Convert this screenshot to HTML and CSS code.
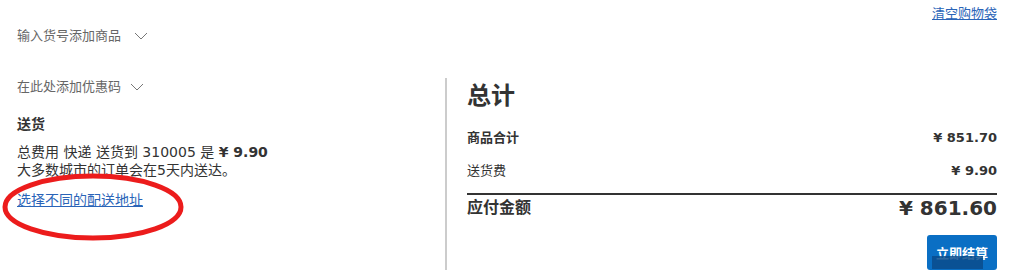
FILE: index.html
```html
<!DOCTYPE html>
<html lang="zh-CN">
<head>
    <meta charset="UTF-8">
    <title>购物袋</title>
    <link rel="stylesheet" href="styles.css">
</head>
<body>
    <div class="page">
        <div class="top-bar">
            <a href="#" class="clear-link">清空购物袋</a>
        </div>

        <div class="toggle add-item">输入货号添加商品
            <svg class="chevron" width="14" height="8" viewBox="0 0 14 8"><polyline points="1,1 7,7 13,1" fill="none" stroke="#777" stroke-width="1"/></svg>
        </div>

        <div class="columns">
            <div class="left">
                <div class="toggle coupon">在此处添加优惠码
                    <svg class="chevron" width="14" height="8" viewBox="0 0 14 8"><polyline points="1,1 7,7 13,1" fill="none" stroke="#777" stroke-width="1"/></svg>
                </div>

                <h3 class="delivery-title">送货</h3>
                <p class="delivery-text">总费用 快递 送货到 310005 是 <b>¥ 9.90</b><br>大多数城市的订单会在5天内送达。</p>
                <a href="#" class="change-address">选择不同的配送地址</a>

                <!-- 红色圈注 -->
                <svg class="circle-mark" width="186" height="72" viewBox="0 0 186 72">
                    <ellipse cx="92" cy="35" rx="88" ry="31" fill="none" stroke="#ec1c1c" stroke-width="5"/>
                </svg>
            </div>

            <div class="right">
                <h2 class="total-title">总计</h2>
                <div class="sum-row">
                    <span class="label strong">商品合计</span>
                    <span class="amount">¥ 851.70</span>
                </div>
                <div class="sum-row">
                    <span class="label">送货费</span>
                    <span class="amount">¥ 9.90</span>
                </div>
                <div class="sum-row grand">
                    <span class="label">应付金额</span>
                    <span class="amount">¥ 861.60</span>
                </div>
                <div class="checkout">
                    <button class="checkout-btn">立即结算<span class="btn-shade"></span></button>
                </div>
            </div>
        </div>
    </div>
</body>
</html>
```

FILE: styles.css
```css
/* Página do carrinho */
body {
    margin: 0;
    background-color: #fff;
    color: #333;
    font-family: "DejaVu Sans", Verdana, "Noto Sans CJK SC", sans-serif;
    font-size: 13px;
    overflow: hidden;
}

.page {
    padding: 0 18px 0 17px;
}

.top-bar {
    text-align: right;
    padding-top: 6px;
    line-height: 16px;
}

a {
    color: #2a64b8;
}

.clear-link {
    font-size: 13px;
}

.toggle {
    color: #666;
    line-height: 20px;
    display: flex;
    align-items: center;
}

.chevron {
    margin-left: 13px;
}

.add-item {
    margin-top: 4px;
}

.columns {
    display: flex;
    margin-top: 32px;
}

.left {
    width: 428px;
    position: relative;
}

.coupon {
    margin-top: -1px;
}

.coupon .chevron {
    margin-left: 9px;
}

.delivery-title {
    margin: 17px 0 0;
    font-size: 14px;
    line-height: 20px;
}

.delivery-text {
    margin: 9px 0 0;
    font-size: 14px;
    line-height: 18px;
}

.change-address {
    display: inline-block;
    margin-top: 12px;
    font-size: 14px;
    line-height: 18px;
}

.circle-mark {
    position: absolute;
    left: -16px;
    top: 94px;
}

.right {
    flex: 1;
    border-left: 2px solid #ccc;
    padding-left: 20px;
    height: 200px;
}

.total-title {
    margin: 3px 0 0;
    font-size: 24px;
    line-height: 30px;
}

.sum-row {
    display: flex;
    justify-content: space-between;
    line-height: 20px;
    margin-top: 13px;
}

.sum-row:first-of-type {
    margin-top: 17px;
}

.label.strong {
    font-weight: bold;
}

.amount {
    font-weight: bold;
}

.sum-row.grand {
    border-top: 2px solid #333;
    margin-top: 12px;
    line-height: 26px;
}

.grand .label {
    font-size: 16px;
    font-weight: bold;
}

.grand .amount {
    font-size: 20px;
}

.checkout {
    text-align: right;
    margin-top: 14px;
}

.checkout-btn {
    position: relative;
    width: 70px;
    height: 35px;
    background-color: #0a6fc4;
    color: #fff;
    border: none;
    border-radius: 3px;
    font-family: inherit;
    font-size: 13px;
    font-weight: bold;
    padding: 0;
}

.btn-shade {
    position: absolute;
    left: 5px;
    bottom: 1px;
    width: 51px;
    height: 13px;
    background-color: #0b4c8c;
    opacity: 0.85;
}
```
